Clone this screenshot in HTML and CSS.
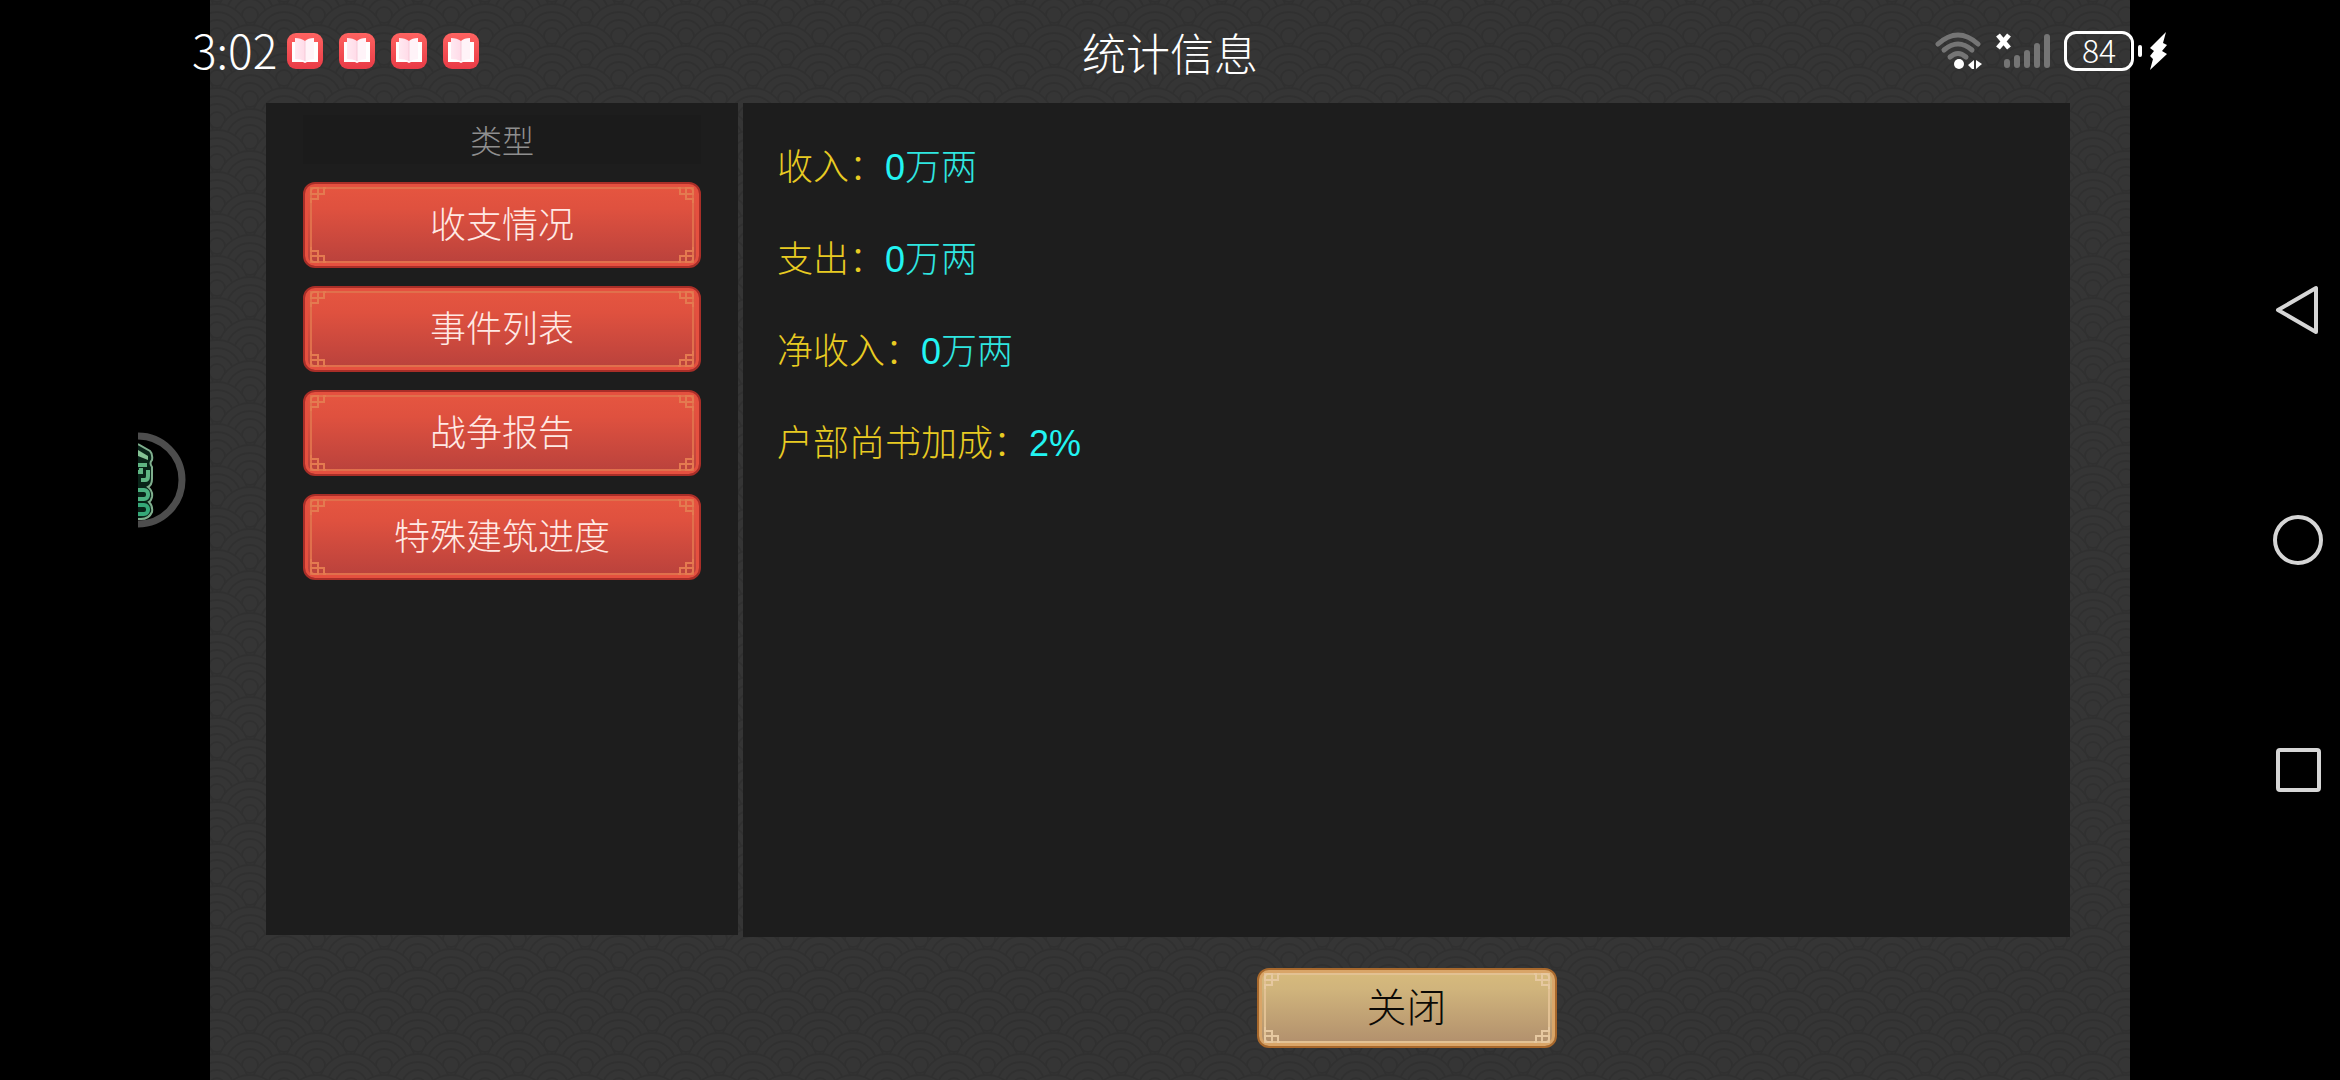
FILE: index.html
```html
<!DOCTYPE html>
<html lang="zh-CN">
<head>
<meta charset="UTF-8">
<title>统计信息</title>
<link rel="stylesheet" href="styles.css">
</head>

<body>

<!-- shared shapes -->
<svg class="defs" aria-hidden="true">
	<defs>
		<linearGradient id="bookBg" x1="0" y1="0" x2="0" y2="1">
			<stop offset="0" stop-color="#ff6361"/>
			<stop offset="1" stop-color="#e93b46"/>
		</linearGradient>
		<linearGradient id="pageLeft">
			<stop offset="0" stop-color="#ffe9f1"/>
			<stop offset="1" stop-color="#ffdbe8"/>
		</linearGradient>
		<symbol id="book" viewBox="0 0 36 36">
			<rect width="36" height="36" rx="9" fill="url(#bookBg)"/>
			<path d="M5 9h26v20H20l-2 1-2-1H5z" fill="#fff"/>
			<path d="M8 5q6 0 10 3v20q-4-2-10-2z" fill="url(#pageLeft)"/>
			<path d="M18 8q3-3 9-3v21q-5 0-9 3z" fill="#fff3f8"/>
			<path d="M18 8v20" stroke="#f6cbd9" fill="none"/>
		</symbol>
		<symbol id="corner" viewBox="0 0 16 16">
			<path d="M1 16V12H8V1H4Q1 1 1 4V7H14V1H16" fill="none" stroke="currentColor" stroke-width="2"/>
		</symbol>
	</defs>
</svg>

<div class="screen">

	<aside class="side">
		<svg class="float-ball" width="50" height="100" viewBox="0 0 50 100">
			<path d="M0 14L12 21Q15 24 14 30Q11 33 14 37V49Q14 55 10 57Q15 61 14 67Q13 71 11 72Q15 76 14 82Q11 89 3 89H0" fill="#082418" stroke="#7fae8d" stroke-width="2"/>
			<path d="M0 20L10 26V30L0 26" fill="#84c294"/>
			<path d="M0 35H9M0 42H3V38M3 50H7Q10 50 10 46V40" fill="none" stroke="#5fb583" stroke-width="4"/>
			<rect x="-4" y="60" width="14" height="9" rx="4" fill="none" stroke="#4bb180" stroke-width="4"/>
			<rect x="-4" y="75" width="14" height="9" rx="4" fill="none" stroke="#35a878" stroke-width="4"/>
			<circle cx="0" cy="50" r="44" fill="none" stroke="#4d4d4d" stroke-width="7"/>
		</svg>
	</aside>

	<main class="game">
		<h1 class="title">统计信息</h1>

		<div class="panels">
			<nav class="types">
				<h2 class="types-head">类型</h2>
				<button type="button" class="btn red">收支情况<svg class="c tl"><use href="#corner"/></svg><svg class="c tr"><use href="#corner"/></svg><svg class="c bl"><use href="#corner"/></svg><svg class="c br"><use href="#corner"/></svg></button>
				<button type="button" class="btn red">事件列表<svg class="c tl"><use href="#corner"/></svg><svg class="c tr"><use href="#corner"/></svg><svg class="c bl"><use href="#corner"/></svg><svg class="c br"><use href="#corner"/></svg></button>
				<button type="button" class="btn red">战争报告<svg class="c tl"><use href="#corner"/></svg><svg class="c tr"><use href="#corner"/></svg><svg class="c bl"><use href="#corner"/></svg><svg class="c br"><use href="#corner"/></svg></button>
				<button type="button" class="btn red">特殊建筑进度<svg class="c tl"><use href="#corner"/></svg><svg class="c tr"><use href="#corner"/></svg><svg class="c bl"><use href="#corner"/></svg><svg class="c br"><use href="#corner"/></svg></button>
			</nav>

			<dl class="stats">
				<div class="row"><dt>收入：</dt><dd><b>0</b>万两</dd></div>
				<div class="row"><dt>支出：</dt><dd><b>0</b>万两</dd></div>
				<div class="row"><dt>净收入：</dt><dd><b>0</b>万两</dd></div>
				<div class="row"><dt>户部尚书加成：</dt><dd><b>2%</b></dd></div>
			</dl>
		</div>

		<div class="foot">
			<button type="button" class="btn gold">关闭<svg class="c tl"><use href="#corner"/></svg><svg class="c tr"><use href="#corner"/></svg><svg class="c bl"><use href="#corner"/></svg><svg class="c br"><use href="#corner"/></svg></button>
		</div>
	</main>

	<nav class="sysnav">
		<button type="button" aria-label="返回"><svg width="50" height="50" viewBox="0 0 50 50"><path d="M43 3V47L5 25z"/></svg></button>
		<button type="button" aria-label="主页"><svg width="50" height="50" viewBox="0 0 50 50"><circle cx="25" cy="25" r="23"/></svg></button>
		<button type="button" aria-label="最近"><svg width="50" height="50" viewBox="0 0 50 50"><rect x="5" y="5" width="41" height="40" rx="2"/></svg></button>
	</nav>

	<!-- phone status bar, drawn over the game -->
	<header class="status">
		<div class="status-left">
			<time class="clock">3:02</time>
			<svg class="book"><use href="#book"/></svg>
			<svg class="book"><use href="#book"/></svg>
			<svg class="book"><use href="#book"/></svg>
			<svg class="book"><use href="#book"/></svg>
		</div>
		<div class="status-right">
			<svg width="48" height="40" viewBox="0 0 48 40">
				<g fill="none" stroke="#757575" stroke-width="5" stroke-linecap="round">
					<path d="M4 13Q24-5 44 13"/>
					<path d="M10 19Q24 7 38 19"/>
					<path d="M16 26Q24 19 32 26"/>
				</g>
				<circle cx="25" cy="33" r="5" fill="#fff"/>
				<path d="M40 29V38H38L34 34zM42 29V38L48 33z" fill="#fff"/>
			</svg>
			<svg width="54" height="40" viewBox="0 0 54 40">
				<path d="M2 4L13 17M13 4L2 17" stroke="#fff" stroke-width="5"/>
				<path d="M11 31V34M21 27V34M31 22V34M41 15V34M51 6V34" stroke="#757575" stroke-width="6" stroke-linecap="round"/>
			</svg>
			<span class="battery">84</span>
			<i class="nub"></i>
			<svg width="18" height="40" viewBox="0 0 18 40"><path d="M16 1L0 17L4 20L0 25L3 28L0 39L17 23L12 20L17 14L13 12z" fill="#fff"/></svg>
		</div>
	</header>

</div>

</body>
</html>
```

FILE: styles.css
```css
* {
	box-sizing: border-box;
}

body {
	margin: 0;
	background: #000;
	color: #fff;
	font-family: "Noto Sans CJK SC", sans-serif;
	font-weight: 300;
}

h1, h2, dl, dd {
	margin: 0;
	font-weight: 300;
}

button {
	padding: 0;
	border: 0;
	background: none;
	font: inherit;
	cursor: pointer;
}

svg {
	display: block;
	flex: none;
}

.defs {
	position: absolute;
	width: 0;
	height: 0;
}

.screen {
	position: relative;
	display: flex;
	min-height: 100vh;
}

.side {
	display: flex;
	align-items: center;
	width: 210px;
	padding-left: 138px;
	padding-bottom: 120px;
	overflow: hidden;
}

/* game window, wave pattern behind */
.game {
	flex: 1;
	display: flex;
	flex-direction: column;
	padding-bottom: 32px;
	background: #333 url("data:image/svg+xml,%3Csvg xmlns='http://www.w3.org/2000/svg' width='67' height='42'%3E%3Cdefs%3E%3Cg id='w' fill='%23353535' stroke='%23303030' stroke-width='2'%3E%3Ccircle r='32'/%3E%3Ccircle r='24'/%3E%3Ccircle r='16'/%3E%3Ccircle r='8'/%3E%3C/g%3E%3C/defs%3E%3Cuse href='%23w' x='0' y='12'/%3E%3Cuse href='%23w' x='67' y='12'/%3E%3Cuse href='%23w' x='33' y='33'/%3E%3Cuse href='%23w' x='0' y='54'/%3E%3Cuse href='%23w' x='67' y='54'/%3E%3Cuse href='%23w' x='33' y='75'/%3E%3C/svg%3E") 7px 24px;
}

.title {
	height: 103px;
	font-size: 44px;
	line-height: 104px;
	text-align: center;
}

.panels {
	flex: 1;
	display: flex;
	gap: 5px;
	margin: 0 60px 0 56px;
}

.types {
	display: flex;
	flex-direction: column;
	gap: 18px;
	width: 472px;
	margin-bottom: 2px;
	padding: 12px 37px;
	background: #1d1d1d;
}

.types-head {
	height: 49px;
	background: #1b1b1b;
	color: #8f8f8f;
	font-size: 32px;
	line-height: 49px;
	text-align: center;
}

.stats {
	flex: 1;
	padding: 15px 34px;
	background: #1d1d1d;
	font-size: 36px;
	line-height: 92px;
}

.row {
	display: flex;
	height: 92px;
}

.row dt {
	color: #e8cb22;
}

.row dd {
	color: #2fe6e0;
}

.row b {
	color: #22f4f2;
	font-family: "Liberation Sans", sans-serif;
	font-weight: 400;
	line-height: 1;
}

.foot {
	display: flex;
	justify-content: center;
	padding: 31px 0 0 473px;
}

/* framed buttons */
.btn {
	position: relative;
	height: 86px;
	padding-bottom: 6px;
	border-radius: 12px;
	font-size: 36px;
}

.btn::before {
	content: "";
	position: absolute;
	inset: 3px 5px;
	border: 2px solid;
}

.red {
	border: 2px solid #a92e28;
	background: linear-gradient(#e65640, #df513f 30%, #b8413c);
	box-shadow: inset 0 0 0 3px #e5503f;
	color: #ffe9e4;
}

.red::before, .red .c {
	color: #e47a50;
	border-color: #e0704c;
}

.gold {
	width: 300px;
	height: 80px;
	border: 2px solid #a8682c;
	background: linear-gradient(#d8bb7c, #d0b47c 25%, #b08e6c);
	box-shadow: inset 0 0 0 3px #d9a568;
	color: #0c0a06;
	font-size: 40px;
}

.gold::before, .gold .c {
	color: #e6c8a0;
	border-color: #e2c193;
}

.c {
	position: absolute;
	width: 16px;
	height: 16px;
}

.tl { top: 3px; left: 5px; }
.tr { top: 3px; right: 5px; transform: scaleX(-1); }
.bl { bottom: 3px; left: 5px; transform: scaleY(-1); }
.br { bottom: 3px; right: 5px; transform: scale(-1); }

/* phone chrome */
.sysnav {
	display: flex;
	flex-direction: column;
	align-items: flex-end;
	justify-content: center;
	gap: 180px;
	width: 210px;
	padding-right: 17px;
}

.sysnav svg {
	fill: none;
	stroke: #d6d6d6;
	stroke-width: 4;
	stroke-linejoin: round;
}

.status {
	position: absolute;
	top: 31px;
	left: 192px;
	right: 172px;
	display: flex;
	justify-content: space-between;
	height: 40px;
}

.status-left, .status-right {
	display: flex;
	align-items: center;
}

.status-left {
	gap: 16px;
}

.clock {
	margin-right: -6px;
	font-size: 46px;
	line-height: 36px;
	padding-bottom: 4px;
}

.book {
	width: 36px;
	height: 36px;
}

.status-right {
	gap: 14px;
}

.battery {
	width: 70px;
	height: 40px;
	border: 3px solid #fff;
	border-radius: 12px;
	font-size: 32px;
	font-weight: 300;
	line-height: 31px;
	text-align: center;
}

.nub {
	width: 4px;
	height: 12px;
	margin: 0 -6px 0 -10px;
	border-radius: 2px;
	background: #fff;
}
```
